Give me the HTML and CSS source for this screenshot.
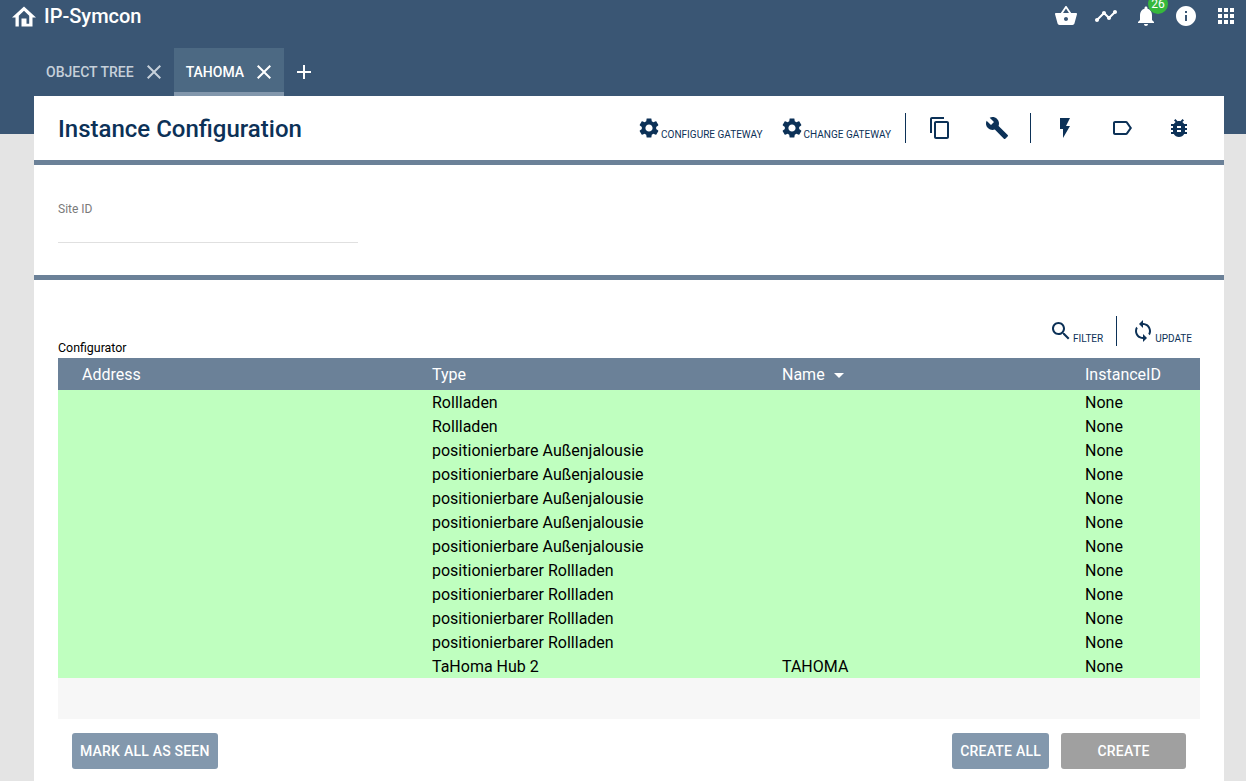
FILE: index.html
```html
<!DOCTYPE html>
<html lang="en">
<head>
<meta charset="utf-8">
<title>IP-Symcon</title>
<link rel="stylesheet" href="styles.css">
</head>
<body>
<header class="top">
  <div class="bar">
    <div class="logo">
      <svg class="logo-icon" viewBox="0 0 24 24"><path d="M12 2.500 24 13.500H20.500V22.500H3.500V13.500H0zM12 6.800 6.800 11.800V22.500H9.500V14.500H14.500V19.800H17.200V11.800z" fill-rule="evenodd"/></svg>
      <span class="logo-text">IP-Symcon</span>
    </div>
    <div class="bar-icons">
      <svg class="ic" viewBox="0 0 24 24"><path d="M17.21 9l-4.38-6.560c-.19-.28-.51-.42-.83-.42-.32 0-.64.14-.83.43L6.790 9H2c-.55 0-1 .45-1 1 0 .09.01.18.04.27l2.540 9.270c.23.84 1 1.460 1.920 1.460h13c.92 0 1.690-.62 1.930-1.460l2.540-9.270L23 10c0-.55-.45-1-1-1h-4.790zM9 9l3-4.400L15 9H9zm3 8c-1.100 0-2-.9-2-2s.9-2 2-2 2 .9 2 2-.9 2-2 2z"/></svg>
      <svg class="ic" viewBox="0 0 24 24"><path d="M23 8c0 1.100-.9 2-2 2-.18 0-.35-.02-.51-.07l-3.560 3.550c.05.16.07.34.07.52 0 1.100-.9 2-2 2s-2-.9-2-2c0-.18.02-.36.07-.52l-2.550-2.550c-.16.05-.34.07-.52.07s-.36-.02-.52-.07l-4.550 4.560c.05.16.07.33.07.51 0 1.100-.9 2-2 2s-2-.9-2-2 .9-2 2-2c.18 0 .35.02.51.07l4.560-4.550C8.020 9.360 8 9.180 8 9c0-1.100.9-2 2-2s2 .9 2 2c0 .18-.02.36-.07.52l2.550 2.550c.16-.05.34-.07.52-.07s.36.02.52.07l3.550-3.560C19.020 8.350 19 8.180 19 8c0-1.100.9-2 2-2s2 .9 2 2z"/></svg>
      <span class="bell">
        <svg class="ic" viewBox="0 0 24 24"><path d="M12 22c1.100 0 2-.9 2-2h-4c0 1.100.89 2 2 2zm6-6v-5c0-3.070-1.640-5.640-4.500-6.320V4c0-.83-.67-1.500-1.500-1.500s-1.500.67-1.500 1.500v.68C7.630 5.360 6 7.920 6 11v5l-2 2v1h16v-1l-2-2z"/></svg>
        <span class="badge">26</span>
      </span>
      <svg class="ic" viewBox="0 0 24 24"><path d="M12 2C6.480 2 2 6.480 2 12s4.480 10 10 10 10-4.480 10-10S17.520 2 12 2zm1 15h-2v-6h2v6zm0-8h-2V7h2v2z"/></svg>
      <svg class="ic" viewBox="0 0 24 24"><path d="M4 8h4V4H4v4zm6 12h4v-4h-4v4zm-6 0h4v-4H4v4zm0-6h4v-4H4v4zm6 0h4v-4h-4v4zm6-10v4h4V4h-4zm-6 4h4V4h-4v4zm6 6h4v-4h-4v4zm0 6h4v-4h-4v4z"/></svg>
    </div>
  </div>
  <nav class="tabs">
    <div class="tab">
      <span>OBJECT TREE</span>
      <svg class="ic" viewBox="0 0 24 24"><path d="M19 6.410L17.590 5 12 10.590 6.410 5 5 6.410 10.590 12 5 17.590 6.410 19 12 13.410 17.590 19 19 17.590 13.410 12z"/></svg>
    </div>
    <div class="tab tab-active">
      <span>TAHOMA</span>
      <svg class="ic" viewBox="0 0 24 24"><path d="M19 6.410L17.590 5 12 10.590 6.410 5 5 6.410 10.590 12 5 17.590 6.410 19 12 13.410 17.590 19 19 17.590 13.410 12z"/></svg>
    </div>
    <svg class="ic tab-add" viewBox="0 0 24 24"><path d="M19 13h-6v6h-2v-6H5v-2h6V5h2v6h6v2z"/></svg>
  </nav>
</header>

<main class="card">
  <section class="title-row">
    <h1>Instance Configuration</h1>
    <div class="actions">
      <div class="text-action">
        <svg class="ic" viewBox="0 0 24 24"><path d="M19.140 12.940c.04-.3.06-.61.06-.94 0-.32-.02-.64-.07-.94l2.030-1.580c.18-.14.23-.41.12-.61l-1.920-3.320c-.12-.22-.37-.29-.59-.22l-2.390.96c-.5-.38-1.030-.7-1.620-.94l-.36-2.540c-.04-.24-.24-.41-.48-.41h-3.840c-.24 0-.43.17-.47.41l-.36 2.540c-.59.24-1.130.57-1.620.94l-2.390-.96c-.22-.08-.47 0-.59.22L2.740 8.870c-.12.21-.08.47.12.61l2.030 1.580c-.05.3-.09.63-.09.94s.02.64.07.94l-2.030 1.580c-.18.14-.23.41-.12.61l1.920 3.320c.12.22.37.29.59.22l2.390-.96c.5.38 1.030.7 1.620.94l.36 2.540c.05.24.24.41.48.41h3.840c.24 0 .44-.17.47-.41l.36-2.540c.59-.24 1.130-.56 1.620-.94l2.390.96c.22.08.47 0 .59-.22l1.920-3.320c.12-.22.07-.47-.12-.61l-2.010-1.580zM12 15.600c-1.980 0-3.600-1.620-3.600-3.600s1.620-3.600 3.600-3.600 3.600 1.620 3.600 3.600-1.620 3.600-3.600 3.600z"/></svg>
        <span>CONFIGURE GATEWAY</span>
      </div>
      <div class="text-action">
        <svg class="ic" viewBox="0 0 24 24"><path d="M19.140 12.940c.04-.3.06-.61.06-.94 0-.32-.02-.64-.07-.94l2.030-1.580c.18-.14.23-.41.12-.61l-1.920-3.320c-.12-.22-.37-.29-.59-.22l-2.390.96c-.5-.38-1.030-.7-1.620-.94l-.36-2.540c-.04-.24-.24-.41-.48-.41h-3.840c-.24 0-.43.17-.47.41l-.36 2.540c-.59.24-1.130.57-1.620.94l-2.390-.96c-.22-.08-.47 0-.59.22L2.740 8.870c-.12.21-.08.47.12.61l2.030 1.580c-.05.3-.09.63-.09.94s.02.64.07.94l-2.030 1.580c-.18.14-.23.41-.12.61l1.920 3.320c.12.22.37.29.59.22l2.390-.96c.5.38 1.030.7 1.620.94l.36 2.540c.05.24.24.41.48.41h3.840c.24 0 .44-.17.47-.41l.36-2.540c.59-.24 1.130-.56 1.620-.94l2.390.96c.22.08.47 0 .59-.22l1.920-3.320c.12-.22.07-.47-.12-.61l-2.010-1.580zM12 15.600c-1.980 0-3.600-1.620-3.600-3.600s1.620-3.600 3.600-3.600 3.600 1.620 3.600 3.600-1.620 3.600-3.600 3.600z"/></svg>
        <span>CHANGE GATEWAY</span>
      </div>
      <i class="divider"></i>
      <div class="icon-action"><svg class="ic" viewBox="0 0 24 24"><path d="M16 1H4c-1.100 0-2 .9-2 2v14h2V3h12V1zm3 4H8c-1.100 0-2 .9-2 2v14c0 1.100.9 2 2 2h11c1.100 0 2-.9 2-2V7c0-1.100-.9-2-2-2zm0 16H8V7h11v14z"/></svg></div>
      <div class="icon-action"><svg class="ic" viewBox="0 0 24 24"><path d="M22.700 19l-9.100-9.100c.9-2.300.4-5-1.500-6.900-2-2-5-2.400-7.400-1.300L9 6 6 9 1.600 4.700C.4 7.100.9 10.100 2.900 12.100c1.900 1.900 4.600 2.400 6.900 1.500l9.100 9.100c.4.4 1 .4 1.400 0l2.300-2.300c.5-.4.5-1.100.1-1.400z"/></svg></div>
      <i class="divider"></i>
      <div class="icon-action"><svg class="ic" viewBox="0 0 24 24"><path d="M7 2v11h3v9l7-12h-4l4-8z"/></svg></div>
      <div class="icon-action"><svg class="ic" viewBox="0 0 24 24"><path d="M17.630 5.840C17.270 5.330 16.670 5 16 5L5 5.010C3.900 5.010 3 5.900 3 7v10c0 1.100.9 1.990 2 1.990L16 19c.67 0 1.270-.33 1.630-.84L22 12l-4.370-6.160zM16 17H5V7h11l3.550 5L16 17z"/></svg></div>
      <div class="icon-action"><svg class="ic" viewBox="0 0 24 24"><path d="M20 8h-2.810c-.45-.78-1.070-1.450-1.820-1.960L17 4.410 15.590 3l-2.170 2.170C12.960 5.060 12.490 5 12 5c-.49 0-.96.06-1.410.17L8.410 3 7 4.410l1.620 1.630C7.880 6.550 7.260 7.220 6.810 8H4v2h2.090c-.05.33-.09.66-.09 1v1H4v2h2v1c0 .34.04.67.09 1H4v2h2.810c1.040 1.790 2.970 3 5.190 3s4.150-1.210 5.190-3H20v-2h-2.090c.05-.33.09-.66.09-1v-1h2v-2h-2v-1c0-.34-.04-.67-.09-1H20V8zm-6 8h-4v-2h4v2zm0-4h-4v-2h4v2z"/></svg></div>
    </div>
  </section>

  <section class="form-row">
    <label class="field-label">Site ID</label>
    <div class="field-line"></div>
  </section>

  <section class="config">
    <div class="config-head">
      <span class="config-label">Configurator</span>
      <div class="config-tools">
        <div class="tool">
          <svg class="ic" viewBox="0 0 24 24"><path d="M15.500 14h-.79l-.28-.27C15.410 12.590 16 11.110 16 9.500 16 5.910 13.090 3 9.500 3S3 5.910 3 9.500 5.910 16 9.500 16c1.610 0 3.090-.59 4.230-1.570l.27.28v.79l5 4.990L20.490 19l-4.990-5zm-6 0C7.010 14 5 11.990 5 9.500S7.010 5 9.500 5 14 7.010 14 9.500 11.990 14 9.500 14z"/></svg>
          <span>FILTER</span>
        </div>
        <i class="divider"></i>
        <div class="tool">
          <svg class="ic" viewBox="0 0 24 24"><path d="M12 4V1L8 5l4 4V6c3.310 0 6 2.690 6 6 0 1.010-.25 1.970-.7 2.800l1.460 1.460C19.540 15.030 20 13.570 20 12c0-4.420-3.580-8-8-8zm0 14c-3.310 0-6-2.690-6-6 0-1.010.25-1.970.7-2.800L5.240 7.740C4.460 8.970 4 10.430 4 12c0 4.420 3.580 8 8 8v3l4-4-4-4v3z"/></svg>
          <span>UPDATE</span>
        </div>
      </div>
    </div>
    <table class="grid">
      <colgroup><col class="c1"><col class="c2"><col class="c3"><col class="c4"></colgroup>
      <thead>
        <tr><th>Address</th><th>Type</th><th>Name<i class="sort"></i></th><th>InstanceID</th></tr>
      </thead>
      <tbody>
        <tr><td></td><td>Rollladen</td><td></td><td>None</td></tr>
        <tr><td></td><td>Rollladen</td><td></td><td>None</td></tr>
        <tr><td></td><td>positionierbare Außenjalousie</td><td></td><td>None</td></tr>
        <tr><td></td><td>positionierbare Außenjalousie</td><td></td><td>None</td></tr>
        <tr><td></td><td>positionierbare Außenjalousie</td><td></td><td>None</td></tr>
        <tr><td></td><td>positionierbare Außenjalousie</td><td></td><td>None</td></tr>
        <tr><td></td><td>positionierbare Außenjalousie</td><td></td><td>None</td></tr>
        <tr><td></td><td>positionierbarer Rollladen</td><td></td><td>None</td></tr>
        <tr><td></td><td>positionierbarer Rollladen</td><td></td><td>None</td></tr>
        <tr><td></td><td>positionierbarer Rollladen</td><td></td><td>None</td></tr>
        <tr><td></td><td>positionierbarer Rollladen</td><td></td><td>None</td></tr>
        <tr><td></td><td>TaHoma Hub 2</td><td>TAHOMA</td><td>None</td></tr>
      </tbody>
    </table>
    <div class="grid-rest"></div>
    <div class="buttons">
      <button class="btn">MARK ALL AS SEEN</button>
      <div class="buttons-right">
        <button class="btn">CREATE ALL</button>
        <button class="btn btn-off">CREATE</button>
      </div>
    </div>
  </section>
</main>
</body>
</html>
```

FILE: styles.css
```css
* { box-sizing: border-box; }
html, body { height: 100%; overflow: hidden; }
body { margin: 0; background: #e4e4e4; font-family: Roboto, "Liberation Sans", sans-serif; color: #000; }
.ic { width: 24px; height: 24px; fill: currentColor; display: block; flex: none; }

.top { height: 134px; background: #3a5674; color: #fff; }
.bar { height: 48px; display: flex; justify-content: space-between; align-items: flex-start; padding: 4px 8px 0 12px; }
.logo { display: flex; align-items: center; gap: 8px; height: 24px; }
.logo-icon { width: 24px; height: 24px; fill: #fff; }
.logo-text { font-size: 20px; font-weight: 500; line-height: 24px; }
.bar-icons { display: flex; gap: 16px; }
.bell { position: relative; display: block; }
.badge { position: absolute; left: 14px; top: -10px; width: 20px; height: 20px; border-radius: 50%; background: #36b83c; color: #fff; font-size: 12px; line-height: 20px; text-align: center; }

.tabs { height: 48px; display: flex; align-items: stretch; padding-left: 34px; }
.tab { display: flex; align-items: center; gap: 8px; padding: 0 8px 0 12px; font-size: 14px; font-weight: 500; color: #c6d0da; }
.tab-active { background: #4c6983; color: #fff; border-bottom: 4px solid #8297ac; padding-top: 4px; }
.tab-add { align-self: center; margin-left: 8px; }

.card { margin: -38px 22px 0 34px; background: #fff; color: #0c3157; height: 720px; }
.title-row { height: 69px; padding: 0 17px 0 24px; border-bottom: 5px solid #6b8198; display: flex; align-items: center; justify-content: space-between; }
h1 { margin: 0; padding-top: 2px; font-size: 24px; font-weight: 500; color: #0c3157; }
.actions { display: flex; align-items: center; }
.text-action { display: flex; align-items: center; font-size: 10px; margin-right: 17px; }
.text-action:nth-child(2) { margin-right: 9px; }
.text-action span { padding-top: 12px; }
.divider { display: block; width: 1px; height: 30px; margin: 0 5px; background: #0c3157; }
.icon-action { width: 57px; display: flex; justify-content: center; }

.form-row { height: 115px; border-bottom: 5px solid #6b8198; padding: 37px 24px 0; }
.field-label { display: block; font-size: 12px; line-height: 14px; color: #7a7a7a; }
.field-line { width: 300px; height: 1px; margin-top: 26px; background: #e0e0e0; }

.config { padding: 0 24px; }
.config-head { height: 78px; display: flex; justify-content: space-between; align-items: flex-end; }
.config-label { font-size: 12.4px; line-height: 13px; color: #000; padding-bottom: 4px; }
.config-tools { display: flex; align-items: center; padding: 0 8px 12px 0; }
.tool { display: flex; align-items: center; font-size: 10px; }
.tool span { padding-top: 15px; }
.config-tools .divider { margin: 0 14px 0 13px; }

.grid { width: 1142px; border-collapse: collapse; table-layout: fixed; font-size: 16px; }
.c1, .c2 { width: 350px; }
.c3 { width: 303px; }
.c4 { width: 139px; }
.grid th { height: 32px; background: #6b8198; color: #fff; font-weight: 400; text-align: left; padding: 0 0 0 24px; }
.grid td { height: 24px; background: #bfffbf; color: #000; padding: 0 0 0 24px; }
.sort { display: inline-block; width: 0; height: 0; margin-left: 9px; vertical-align: 2px; border: 5px solid transparent; border-top-color: #fff; border-bottom: 0; }
.grid-rest { height: 41px; background: #f7f7f7; }

.buttons { display: flex; justify-content: space-between; padding: 14px 14px 0; }
.buttons-right { display: flex; gap: 12px; }
.btn { height: 36px; padding: 0 8px; border: 0; border-radius: 3px; background: #8398ad; color: #fff; font: 500 14px Roboto, "Liberation Sans", sans-serif; letter-spacing: .22px; }
.btn-off { width: 125px; background: #a0a0a0; }
```
